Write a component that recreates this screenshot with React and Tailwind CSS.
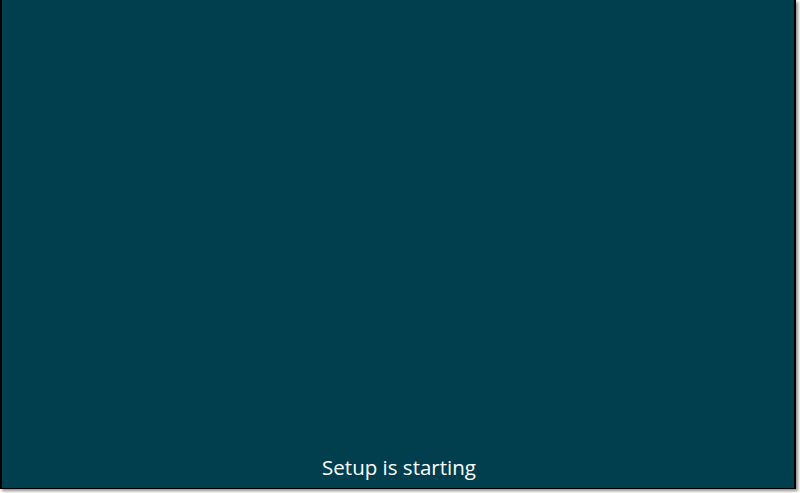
import React from "react";

const App = () => {
  return (
    <div className="w-[800px] h-[493px] bg-white overflow-hidden">
      <div className="w-[796px] h-[489px] bg-[#023f4e] border-l-2 border-r-2 border-b border-black shadow-[2px_2px_3px_rgba(0,0,0,0.45)] flex flex-col justify-end items-center pb-[7px]">
        <span
          className="text-white text-[20.5px] leading-[28px] pl-[2px]"
          style={{ fontFamily: '"Open Sans", "Noto Sans", sans-serif' }}
        >
          Setup is starting
        </span>
      </div>
    </div>
  );
};

export default App;
